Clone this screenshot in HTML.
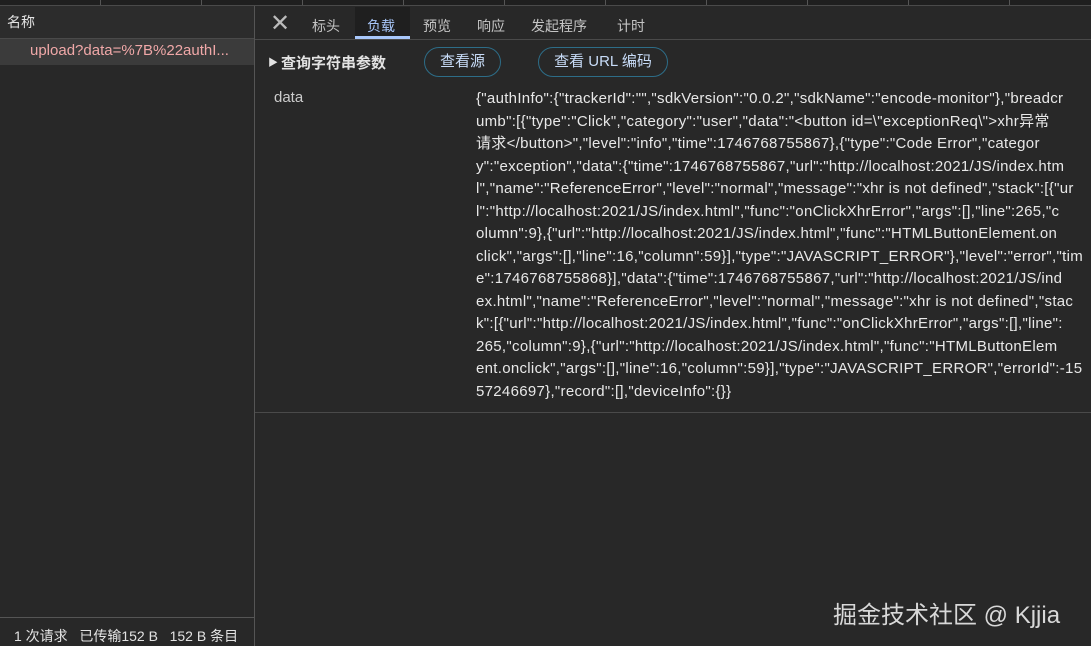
<!DOCTYPE html><html><head><meta charset="utf-8"><style>
body{margin:0;width:1091px;height:646px;background:#282828;font-family:"Liberation Sans","Noto Sans CJK SC",sans-serif;color:#e3e3e3;position:relative;overflow:hidden;font-size:14px}
.a{position:absolute}
.d{position:absolute;top:0;width:1px;height:5px;background:#555}
</style></head><body>
<div class="a" style="left:0;top:0;width:1091px;height:5px;background:#1f1f1f;border-bottom:1px solid #4a4a4a"></div>
<div class="d" style="left:100px"></div><div class="d" style="left:201px"></div><div class="d" style="left:302px"></div><div class="d" style="left:403px"></div><div class="d" style="left:504px"></div><div class="d" style="left:605px"></div><div class="d" style="left:706px"></div><div class="d" style="left:807px"></div><div class="d" style="left:908px"></div><div class="d" style="left:1009px"></div>
<div class="a" style="left:0;top:6px;width:254px;height:32px;background:#2c2c2c;border-bottom:1px solid #4a4a4a"></div>
<div class="a" style="left:7px;top:12px;font-size:14px">名称</div>
<div class="a" style="left:0;top:39px;width:254px;height:26px;background:#3b3b3b"></div>
<div class="a" style="left:30px;top:42px;font-size:15px;color:#f0a8a8">upload?data=%7B%22authI...</div>
<div class="a" style="left:254px;top:6px;width:1px;height:640px;background:#555"></div>
<div class="a" style="left:0;top:617px;width:254px;height:1px;background:#555"></div>
<div class="a" style="left:14px;top:626px;font-size:14px;white-space:nowrap;width:232px;overflow:hidden">1 次请求&nbsp;&nbsp; 已传输152 B&nbsp;&nbsp; 152 B 条目</div>
<div class="a" style="left:255px;top:6px;width:836px;height:33px;border-bottom:1px solid #4a4a4a"></div>
<div class="a" style="left:270px;top:9px;font-size:24px;color:#bbb;font-weight:200">✕</div>
<div class="a" style="left:355px;top:7px;width:55px;height:32px;background:#1f1f1f;border-bottom:3px solid #a8c7fa;box-sizing:border-box"></div>
<div class="a" style="left:312px;top:16px;color:#c4c4c4">标头</div>
<div class="a" style="left:367px;top:16px;color:#a8c7fa">负载</div>
<div class="a" style="left:423px;top:16px;color:#c4c4c4">预览</div>
<div class="a" style="left:477px;top:16px;color:#c4c4c4">响应</div>
<div class="a" style="left:531px;top:16px;color:#c4c4c4">发起程序</div>
<div class="a" style="left:617px;top:16px;color:#c4c4c4">计时</div>
<div class="a" style="left:268px;top:54px;font-size:10px">▶</div>
<div class="a" style="left:281px;top:52px;font-weight:bold;font-size:15px">查询字符串参数</div>
<div class="a" style="left:424px;top:47px;width:75px;height:28px;border:1px solid #2d6d88;border-radius:15px;text-align:center;line-height:28px;color:#c8dcf8;font-size:15px">查看源</div>
<div class="a" style="left:538px;top:47px;width:128px;height:28px;border:1px solid #2d6d88;border-radius:15px;text-align:center;line-height:28px;color:#c8dcf8;font-size:15px">查看 URL 编码</div>
<div class="a" style="left:274px;top:89px;color:#ccc;font-size:15px">data</div>
<div class="a" style="left:476px;top:88px;line-height:22.5px;white-space:nowrap;color:#e8e8e8;font-size:15px;letter-spacing:0.3px">{"authInfo":{"trackerId":"","sdkVersion":"0.0.2","sdkName":"encode-monitor"},"breadcr<br>umb":[{"type":"Click","category":"user","data":"&lt;button id=\"exceptionReq\"&gt;xhr异常<br>请求&lt;/button&gt;","level":"info","time":1746768755867},{"type":"Code Error","categor<br>y":"exception","data":{"time":1746768755867,"url":"http://localhost:2021/JS/index.htm<br>l","name":"ReferenceError","level":"normal","message":"xhr is not defined","stack":[{"ur<br>l":"http://localhost:2021/JS/index.html","func":"onClickXhrError","args":[],"line":265,"c<br>olumn":9},{"url":"http://localhost:2021/JS/index.html","func":"HTMLButtonElement.on<br>click","args":[],"line":16,"column":59}],"type":"JAVASCRIPT_ERROR"},"level":"error","tim<br>e":1746768755868}],"data":{"time":1746768755867,"url":"http://localhost:2021/JS/ind<br>ex.html","name":"ReferenceError","level":"normal","message":"xhr is not defined","stac<br>k":[{"url":"http://localhost:2021/JS/index.html","func":"onClickXhrError","args":[],"line":<br>265,"column":9},{"url":"http://localhost:2021/JS/index.html","func":"HTMLButtonElem<br>ent.onclick","args":[],"line":16,"column":59}],"type":"JAVASCRIPT_ERROR","errorId":-15<br>57246697},"record":[],"deviceInfo":{}}</div>
<div class="a" style="left:255px;top:412px;width:836px;height:1px;background:#4a4a4a"></div>
<div class="a" style="left:833px;top:595px;font-size:24px;color:#d8d8d8">掘金技术社区 @ Kjjia</div>
</body></html>
